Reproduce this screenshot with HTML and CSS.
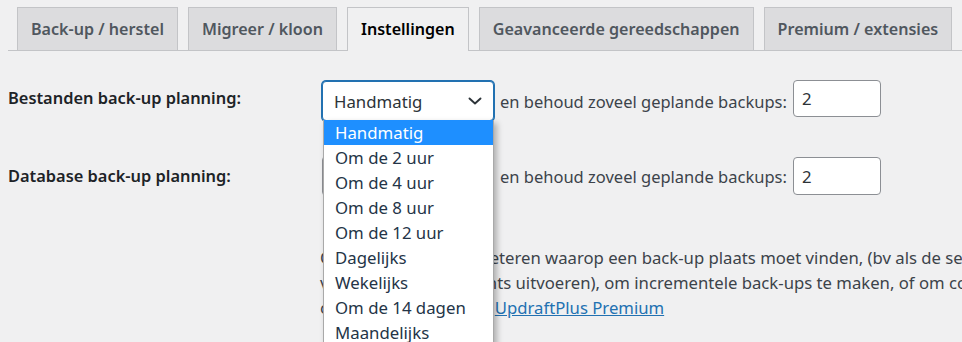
FILE: index.html
```html
<!DOCTYPE html>
<html lang="nl">
<head>
<meta charset="utf-8">
<title>UpdraftPlus – Instellingen</title>
<link rel="stylesheet" href="styles.css">
</head>
<body>
<div class="wrap">
  <nav class="tabs">
    <a class="tab">Back-up / herstel</a>
    <a class="tab">Migreer / kloon</a>
    <a class="tab tab-active">Instellingen</a>
    <a class="tab">Geavanceerde gereedschappen</a>
    <a class="tab">Premium / extensies</a>
  </nav>

  <div class="settings">
    <div class="row row-first">
      <div class="label">Bestanden back-up planning:</div>
      <div class="field">
        <div class="select-wrap">
          <div class="select select-focus"><span class="select-text">Handmatig</span><svg class="chev" viewBox="0 0 16 16" width="16" height="16"><path d="M2.5 5.5 8 10.5l5.5-5" fill="none" stroke="#2c3338" stroke-width="1.9" stroke-linecap="round" stroke-linejoin="round"/></svg></div>
          <ul class="dropdown">
            <li class="opt opt-selected">Handmatig</li>
            <li class="opt">Om de 2 uur</li>
            <li class="opt">Om de 4 uur</li>
            <li class="opt">Om de 8 uur</li>
            <li class="opt">Om de 12 uur</li>
            <li class="opt">Dagelijks</li>
            <li class="opt">Wekelijks</li>
            <li class="opt">Om de 14 dagen</li>
            <li class="opt">Maandelijks</li>
          </ul>
        </div>
        <span class="retain">en behoud zoveel geplande backups:</span>
        <div class="num num-first">2</div>
      </div>
    </div>

    <div class="row row-second">
      <div class="label label-second">Database back-up planning:</div>
      <div class="field">
        <div class="select"><span class="select-text">Handmatig</span><svg class="chev" viewBox="0 0 16 16" width="16" height="16"><path d="M2.5 5.5 8 10.5l5.5-5" fill="none" stroke="#2c3338" stroke-width="1.9" stroke-linecap="round" stroke-linejoin="round"/></svg></div>
        <span class="retain">en behoud zoveel geplande backups:</span>
        <div class="num">2</div>
      </div>
    </div>

    <p class="note">Om de tijdstip te verbeteren waarop een back-up plaats moet vinden, (bv als de server overdag druk is en u ze<br>vooral na grotere events uitvoeren), om incrementele back-ups te maken, of om complexere schema's te<br>configureren, gebruik <a class="link">UpdraftPlus Premium</a></p>
  </div>
</div>
</body>
</html>
```

FILE: styles.css
```css
html, body {
  margin: 0;
  padding: 0;
}

body {
  background: #f0f0f1;
  color: #3c434a;
  font-family: "Noto Sans", "Open Sans", sans-serif;
  font-size: 16.5px;
  line-height: 25px;
  overflow: hidden;
  width: 962px;
  height: 342px;
}

.wrap {
  padding-left: 8px;
}

/* Tabs */
.tabs {
  display: flex;
  gap: 10px;
  padding: 7px 0 0 9px;
  border-bottom: 1px solid #c3c4c7;
  white-space: nowrap;
}

.tab {
  display: block;
  background: #dcdcde;
  border: 1px solid #c3c4c7;
  border-bottom: none;
  color: #50575e;
  font-weight: 600;
  font-size: 16.1px;
  line-height: 30px;
  padding: 6px 13px;
}

.tab-active {
  background: #f0f0f1;
  color: #000;
  margin-bottom: -1px;
  padding-bottom: 7px;
}

/* Settings rows */
.settings {
  padding-top: 30px;
}

.row {
  display: flex;
  align-items: flex-start;
}

.row-second {
  margin-top: 35px;
}

.label {
  width: 314px;
  flex: none;
  color: #1d2327;
  font-weight: 600;
  font-size: 16.4px;
  padding-top: 4px;
}

.label-second {
  padding-top: 7px;
}

.field {
  display: flex;
  align-items: center;
  white-space: nowrap;
}

.select-wrap {
  position: relative;
}

.select {
  box-sizing: border-box;
  width: 172px;
  height: 40px;
  border: 1px solid #8c8f94;
  border-radius: 4px;
  background: #fff;
  color: #2c3338;
  padding: 0 0 0 11px;
  display: flex;
  align-items: center;
  font-size: 16.8px;
}

.select-text {
  flex: 1;
}

.select-focus {
  border-color: #2271b1;
  box-shadow: 0 0 0 1px #2271b1;
}

.chev {
  flex: none;
  margin-right: 10px;
}

.retain {
  margin-left: 6px;
  margin-right: 6px;
  font-size: 16.5px;
}

.num {
  box-sizing: border-box;
  width: 88px;
  height: 38px;
  border: 1px solid #8c8f94;
  border-radius: 4px;
  background: #fff;
  color: #2c3338;
  padding-left: 8px;
  display: flex;
  align-items: center;
  font-size: 16.8px;
}

.num-first {
  height: 37px;
  margin-top: -5px;
}

/* Open dropdown list */
.dropdown {
  position: absolute;
  left: 1px;
  top: 39px;
  width: 171px;
  box-sizing: border-box;
  margin: 0;
  padding: 0;
  list-style: none;
  background: #fff;
  border: 1px solid #a9a9a9;
  border-top: none;
  box-shadow: 3px 3px 6px rgba(0, 0, 0, 0.28);
  z-index: 10;
}

.opt {
  height: 25px;
  line-height: 25px;
  padding-left: 11px;
  color: #243447;
  font-size: 16.8px;
}

.opt-selected {
  background: #1e8fff;
  color: #fff;
}

/* Note paragraph */
.note {
  margin: 49px 0 0 312px;
  white-space: nowrap;
  line-height: 25px;
  font-size: 16.7px;
}

.link {
  color: #2271b1;
  text-decoration: underline;
}
```
